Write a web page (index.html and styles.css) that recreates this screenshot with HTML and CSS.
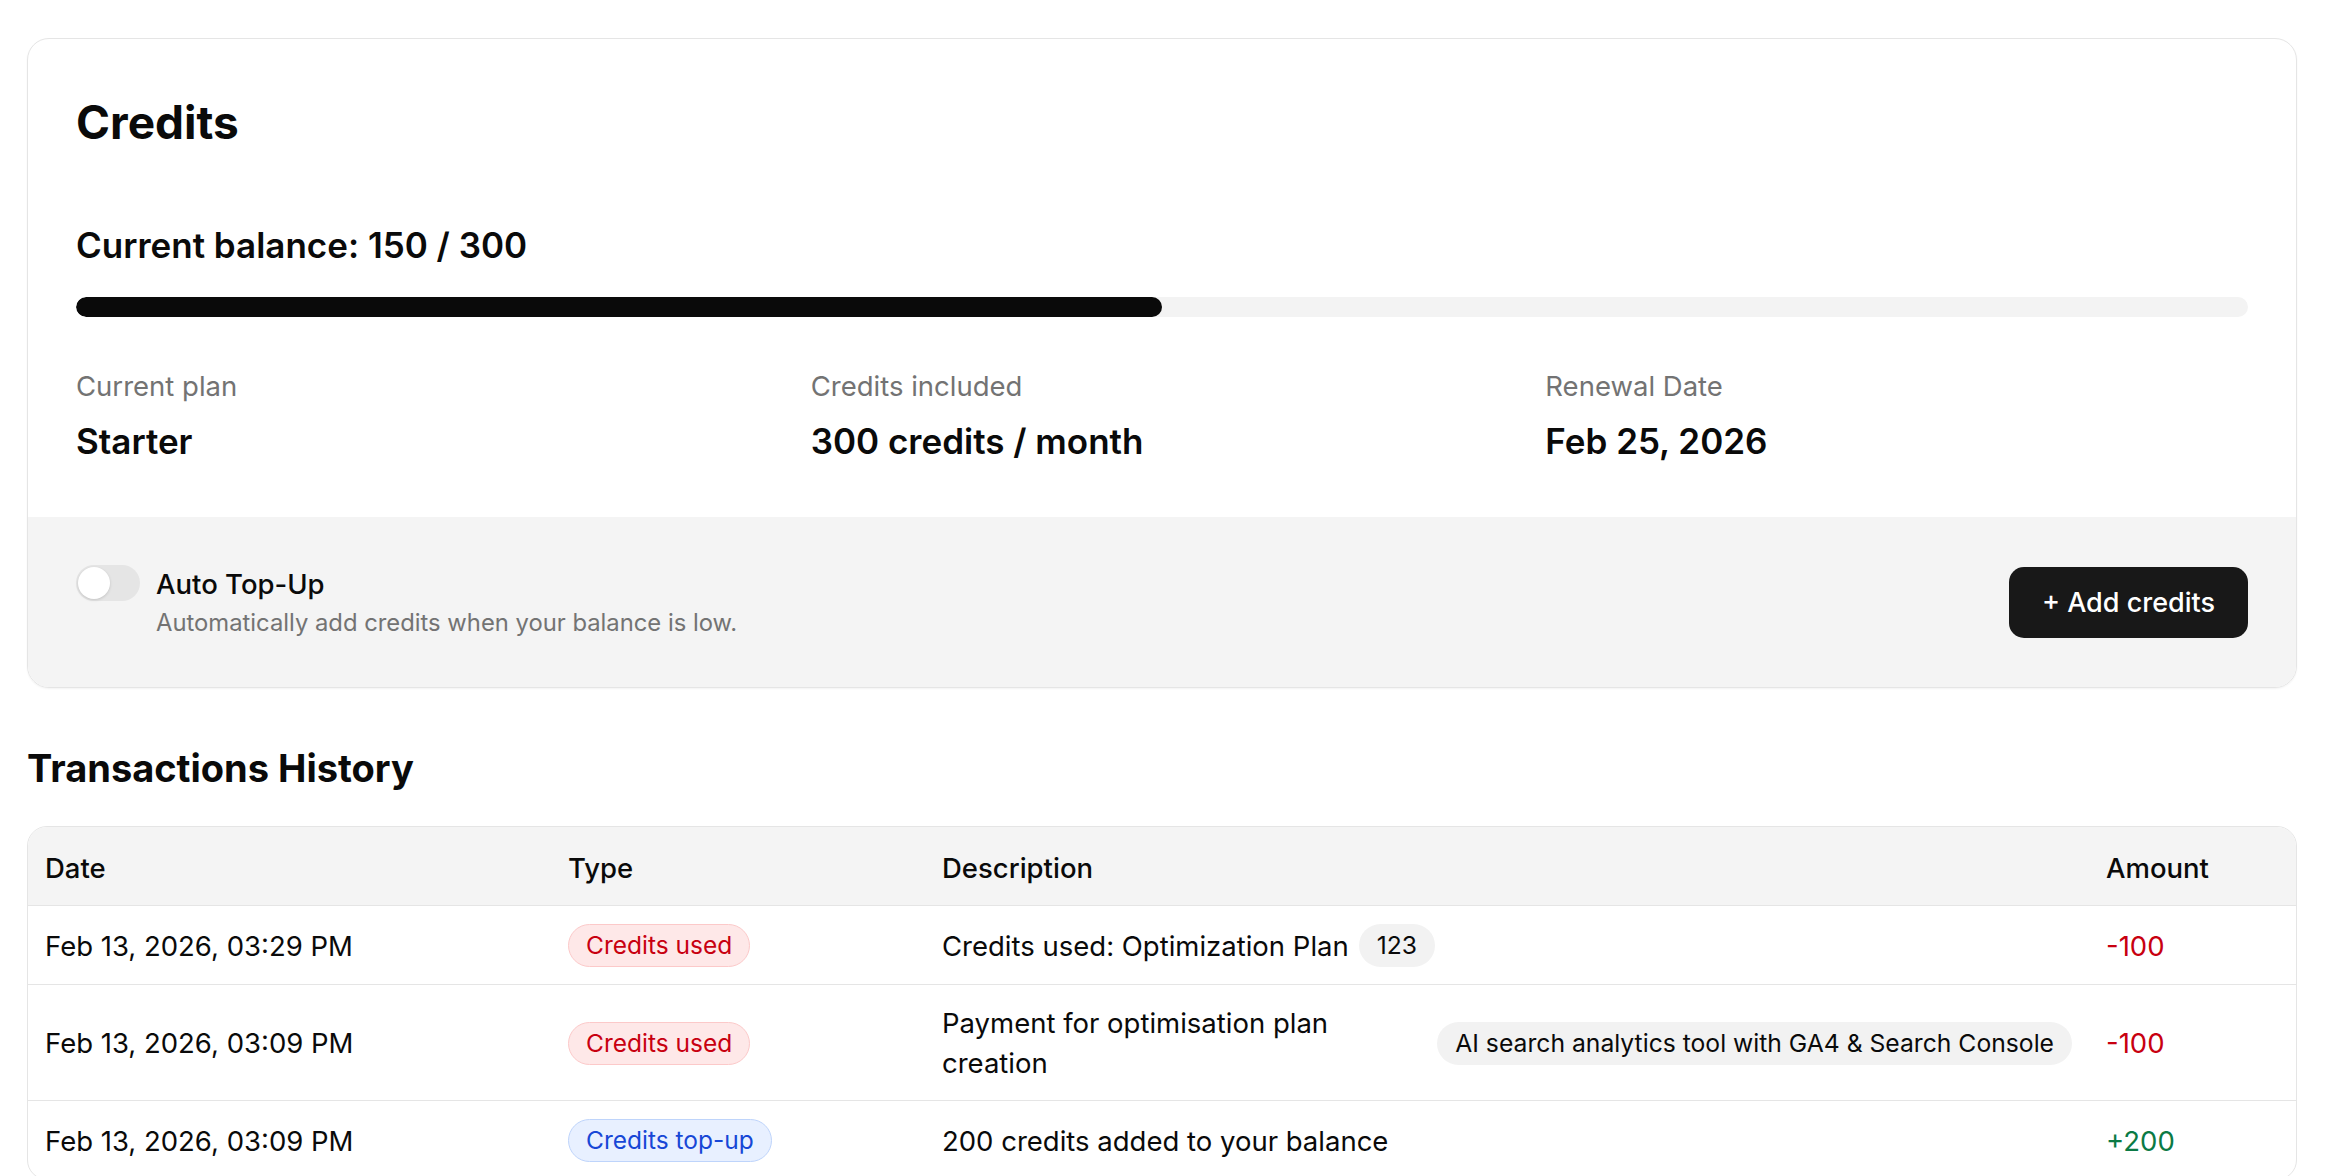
FILE: index.html
```html
<!DOCTYPE html>
<html lang="en">
<head>
    <meta charset="UTF-8">
    <meta name="viewport" content="width=device-width, initial-scale=1.0">
    <title>Credits</title>
    <link rel="stylesheet" href="styles.css">
</head>
<body>
    <div class="page">
        <section class="credits-card">
            <div class="credits-body">
                <h1>Credits</h1>
                <div class="balance">Current balance: 150 / 300</div>
                <div class="progress">
                    <div class="progress-fill" style="width: 50%;"></div>
                </div>
                <div class="stats">
                    <div class="stat">
                        <div class="stat-label">Current plan</div>
                        <div class="stat-value">Starter</div>
                    </div>
                    <div class="stat">
                        <div class="stat-label">Credits included</div>
                        <div class="stat-value">300 credits / month</div>
                    </div>
                    <div class="stat">
                        <div class="stat-label">Renewal Date</div>
                        <div class="stat-value">Feb 25, 2026</div>
                    </div>
                </div>
            </div>
            <div class="credits-footer">
                <div class="topup">
                    <span class="toggle"><span class="toggle-knob"></span></span>
                    <div class="topup-text">
                        <div class="topup-title">Auto Top-Up</div>
                        <div class="topup-desc">Automatically add credits when your balance is low.</div>
                    </div>
                </div>
                <button type="button" class="add-button">+ Add credits</button>
            </div>
        </section>

        <h2>Transactions History</h2>

        <div class="table-wrap">
            <table class="tx-table">
                <colgroup>
                    <col class="col-date">
                    <col class="col-type">
                    <col class="col-desc">
                    <col>
                </colgroup>
                <thead>
                    <tr>
                        <th>Date</th>
                        <th>Type</th>
                        <th>Description</th>
                        <th>Amount</th>
                    </tr>
                </thead>
                <tbody>
                    <tr>
                        <td>Feb 13, 2026, 03:29 PM</td>
                        <td><span class="badge badge-used">Credits used</span></td>
                        <td>
                            <div class="desc">
                                <span class="desc-text">Credits used: Optimization Plan</span>
                                <span class="chip">123</span>
                            </div>
                        </td>
                        <td class="amount negative">-100</td>
                    </tr>
                    <tr>
                        <td>Feb 13, 2026, 03:09 PM</td>
                        <td><span class="badge badge-used">Credits used</span></td>
                        <td>
                            <div class="desc">
                                <span class="desc-text">Payment for optimisation plan creation</span>
                                <span class="chip">AI search analytics tool with GA4 &amp; Search Console</span>
                            </div>
                        </td>
                        <td class="amount negative">-100</td>
                    </tr>
                    <tr>
                        <td>Feb 13, 2026, 03:09 PM</td>
                        <td><span class="badge badge-topup">Credits top-up</span></td>
                        <td>
                            <div class="desc">
                                <span class="desc-text">200 credits added to your balance</span>
                            </div>
                        </td>
                        <td class="amount positive">+200</td>
                    </tr>
                </tbody>
            </table>
        </div>
    </div>
</body>
</html>
```

FILE: styles.css
```css
body {
    margin: 0;
    font-family: Inter, "Noto Sans", Arial, sans-serif;
    color: #0a0a0a;
    background-color: #fff;
}
.page {
    padding: 38px 33px 0 27px;
}
.credits-card {
    border: 1px solid #e5e5e5;
    border-radius: 22px;
    overflow: hidden;
    box-shadow: 0 1px 2px rgba(0, 0, 0, 0.05);
}
.credits-body {
    padding: 54px 48px 55px;
}
h1 {
    margin: 0 0 74px;
    font-size: 46px;
    line-height: 58px;
    font-weight: 700;
}
.balance {
    font-size: 35px;
    line-height: 41px;
    font-weight: 600;
    margin-bottom: 31px;
}
.progress {
    height: 20px;
    border-radius: 10px;
    background-color: #f3f3f3;
    overflow: hidden;
}
.progress-fill {
    height: 100%;
    border-radius: 10px;
    background-color: #0a0a0a;
}
.stats {
    display: grid;
    grid-template-columns: repeat(3, 1fr);
    gap: 32px;
    margin-top: 49px;
}
.stat-label {
    font-size: 27.5px;
    line-height: 40px;
    color: #737373;
}
.stat-value {
    margin-top: 15px;
    font-size: 35px;
    line-height: 41px;
    font-weight: 600;
}
.credits-footer {
    display: flex;
    align-items: center;
    justify-content: space-between;
    padding: 46px 48px;
    background-color: #f4f4f4;
}
.topup {
    display: flex;
    align-items: flex-start;
    gap: 16px;
}
.toggle {
    flex-shrink: 0;
    display: flex;
    align-items: center;
    width: 64px;
    height: 36px;
    margin-top: 2px;
    padding: 2px;
    box-sizing: border-box;
    border-radius: 18px;
    background-color: #e5e5e5;
}
.toggle-knob {
    width: 32px;
    height: 32px;
    border-radius: 50%;
    background-color: #fff;
    box-shadow: 0 1px 3px rgba(0, 0, 0, 0.15);
}
.topup-title {
    font-size: 27.5px;
    line-height: 42px;
    font-weight: 500;
}
.topup-desc {
    font-size: 23.8px;
    line-height: 36px;
    color: #737373;
}
.add-button {
    padding: 0 33px;
    height: 71px;
    border: none;
    border-radius: 15px;
    background-color: #181818;
    color: #fff;
    font-family: inherit;
    font-size: 27px;
    font-weight: 500;
    cursor: pointer;
}
h2 {
    margin: 57px 0 35px;
    font-size: 38px;
    line-height: 46px;
    font-weight: 700;
}
.table-wrap {
    border: 1px solid #e5e5e5;
    border-radius: 20px;
    overflow: hidden;
}
.tx-table {
    width: 100%;
    table-layout: fixed;
    border-collapse: separate;
    border-spacing: 0;
    font-size: 27.5px;
    line-height: 40px;
}
.col-date {
    width: 523px;
}
.col-type {
    width: 374px;
}
.col-desc {
    width: 1164px;
}
.tx-table th {
    padding: 21px 17px 17px;
    text-align: left;
    font-weight: 500;
    background-color: #f4f4f4;
    border-bottom: 1px solid #e5e5e5;
}
.tx-table td {
    padding: 18px 17px 17px;
    vertical-align: middle;
}
.tx-table tbody tr + tr td {
    border-top: 1px solid #e5e5e5;
}
.badge {
    display: inline-block;
    padding: 3px 17px;
    border: 1px solid;
    border-radius: 999px;
    font-size: 24.5px;
    line-height: 35px;
}
.badge-used {
    background-color: #fee8e8;
    border-color: #fcc9c9;
    color: #c80010;
}
.badge-topup {
    background-color: #e8f0ff;
    border-color: #bed4fb;
    color: #1747d6;
}
.desc {
    display: flex;
    align-items: center;
    gap: 10px;
}
.desc-text {
    flex: 0 1 auto;
}
.chip {
    flex-shrink: 0;
    padding: 3px 18px;
    border-radius: 999px;
    background-color: #f2f2f2;
    font-size: 24.7px;
    line-height: 37px;
}
.negative {
    color: #c80010;
}
.positive {
    color: #0b7a45;
}
```
